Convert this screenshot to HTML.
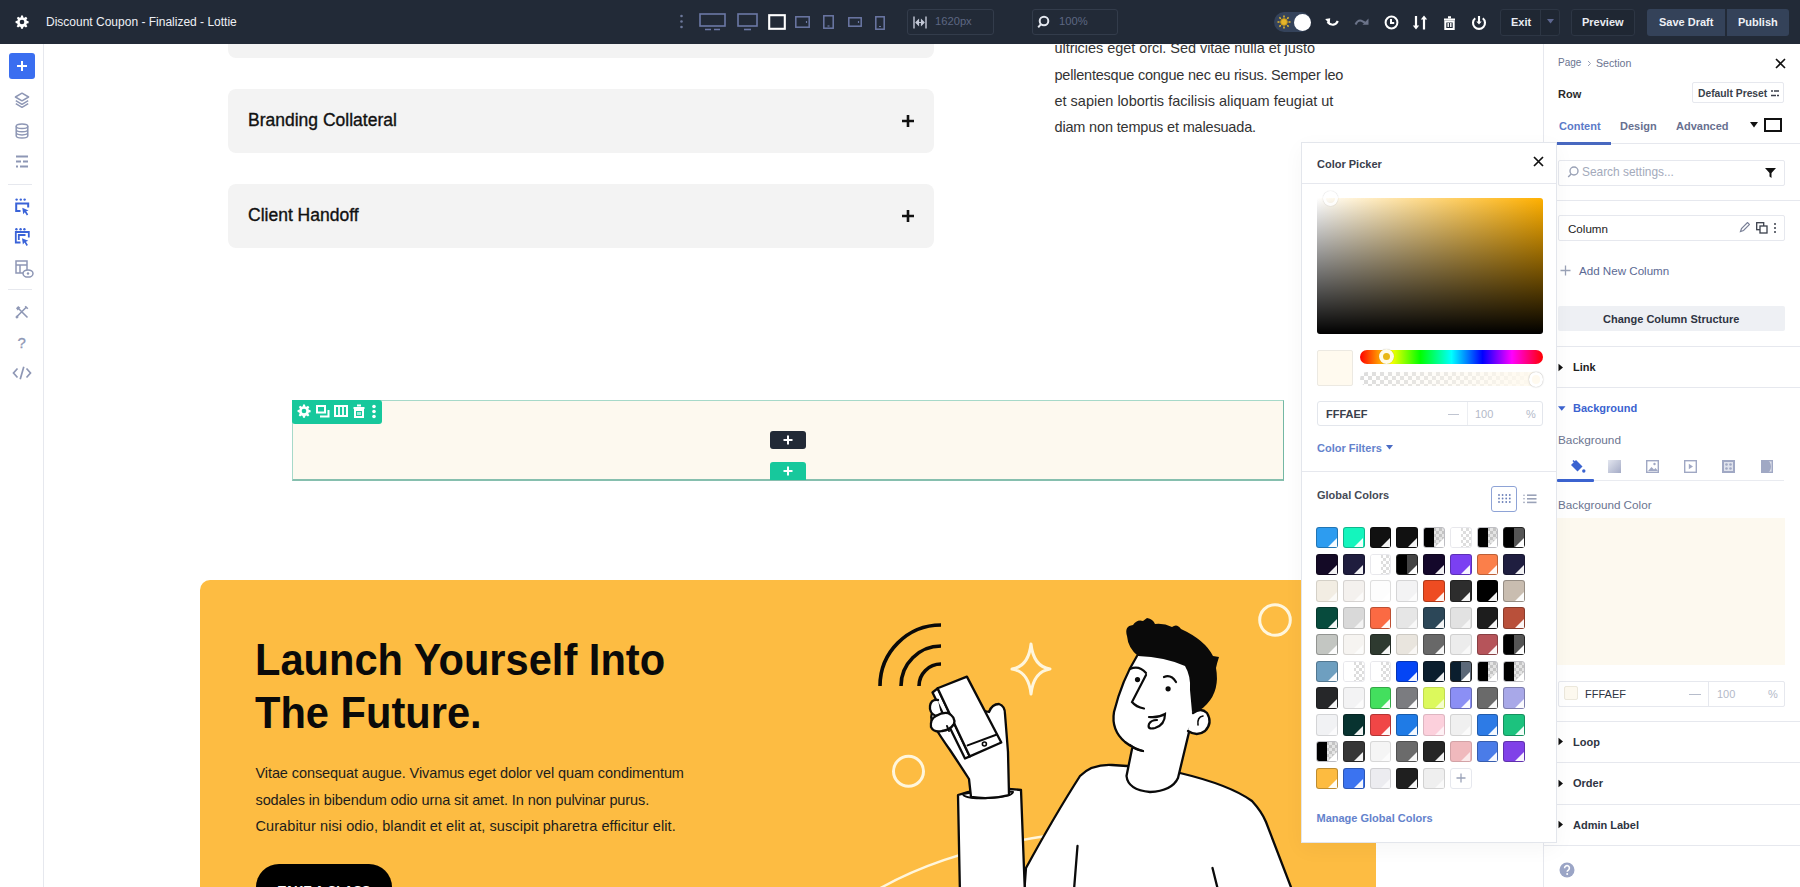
<!DOCTYPE html>
<html><head><meta charset="utf-8">
<style>
*{box-sizing:border-box;margin:0;padding:0}
html,body{width:1800px;height:887px;overflow:hidden;background:#fff;font-family:"Liberation Sans",sans-serif;position:relative}
.a{position:absolute}
.t{position:absolute;white-space:nowrap;line-height:1}
#top{left:0;top:0;width:1800px;height:44px;background:#222a37}
#side{left:0;top:44px;width:44px;height:843px;background:#fff;border-right:1px solid #e6e8ee}
</style></head><body>

<!-- ============ CANVAS ============ -->
<div id="canvas">
  <!-- accordions -->
  <div class="a" style="left:228px;top:-6px;width:706px;height:64px;background:#f3f3f3;border-radius:8px"></div>
  <div class="a" style="left:228px;top:89px;width:706px;height:64px;background:#f3f3f3;border-radius:8px"></div>
  <div class="a" style="left:228px;top:184px;width:706px;height:64px;background:#f3f3f3;border-radius:8px"></div>
  <div class="t" style="left:248px;top:111.5px;font-size:17.5px;color:#111;-webkit-text-stroke:0.35px #111">Branding Collateral</div>
  <div class="t" style="left:248px;top:206.5px;font-size:17.5px;color:#111;-webkit-text-stroke:0.35px #111">Client Handoff</div>
  <svg class="a" style="left:901px;top:114px" width="14" height="14"><path d="M7 1V13M1 7H13" stroke="#111" stroke-width="2.6"/></svg>
  <svg class="a" style="left:901px;top:209px" width="14" height="14"><path d="M7 1V13M1 7H13" stroke="#111" stroke-width="2.6"/></svg>

  <!-- right text -->
  <div class="t" style="left:1054.5px;top:41px;font-size:14.5px;color:#333;letter-spacing:-0.05px">ultricies eget orci. Sed vitae nulla et justo</div>
  <div class="t" style="left:1054.5px;top:68px;font-size:14.5px;color:#333;letter-spacing:-0.22px">pellentesque congue nec eu risus. Semper leo</div>
  <div class="t" style="left:1054.5px;top:94px;font-size:14.5px;color:#333">et sapien lobortis facilisis aliquam feugiat ut</div>
  <div class="t" style="left:1054.5px;top:120px;font-size:14.5px;color:#333;letter-spacing:-0.17px">diam non tempus et malesuada.</div>

  <!-- row -->
  <div class="a" style="left:292px;top:400px;width:992px;height:81px;background:#fdf9ef;border:1px solid #a6d9c9;border-bottom:2px solid #86bfae;border-right:1.5px solid #74b8a4"></div>
  <div class="a" style="left:292px;top:400px;width:90px;height:24px;background:#17c89c;border-radius:0 3px 3px 3px"></div>
  <svg class="a" style="left:297px;top:404px" width="14" height="14" viewBox="0 0 24 24"><path fill="#fff" d="M10.3 1h3.4l.6 3.1 1.9.8 2.6-1.8 2.4 2.4-1.8 2.6.8 1.9 3.1.6v3.4l-3.1.6-.8 1.9 1.8 2.6-2.4 2.4-2.6-1.8-1.9.8-.6 3.1h-3.4l-.6-3.1-1.9-.8-2.6 1.8-2.4-2.4 1.8-2.6-.8-1.9L1 13.7v-3.4l3.1-.6.8-1.9-1.8-2.6 2.4-2.4 2.6 1.8 1.9-.8zM12 8a4 4 0 100 8 4 4 0 000-8z"/></svg>
  <svg class="a" style="left:316px;top:405px" width="14" height="13"><path d="M1 1h8v6.5H1z" fill="none" stroke="#fff" stroke-width="2"/><path d="M4 11.5h8.5V5" fill="none" stroke="#fff" stroke-width="2"/></svg>
  <svg class="a" style="left:334px;top:405px" width="14" height="12"><rect x="1" y="1" width="12" height="10" fill="none" stroke="#fff" stroke-width="2"/><path d="M5 1v10M9 1v10" stroke="#fff" stroke-width="1.8"/></svg>
  <svg class="a" style="left:353px;top:404px" width="12" height="14"><path d="M0.5 4h11M4 1.5h4" stroke="#fff" stroke-width="2"/><rect x="2" y="6" width="8" height="7" fill="none" stroke="#fff" stroke-width="2"/><path d="M5 8v3M7 8v3" stroke="#fff" stroke-width="1.2"/></svg>
  <svg class="a" style="left:371px;top:404px" width="6" height="15"><circle cx="3" cy="2.5" r="1.8" fill="#fff"/><circle cx="3" cy="7.5" r="1.8" fill="#fff"/><circle cx="3" cy="12.5" r="1.8" fill="#fff"/></svg>
  <div class="a" style="left:770px;top:431px;width:36px;height:18px;background:#222a36;border-radius:3px"></div>
  <svg class="a" style="left:782px;top:434px" width="12" height="12"><path d="M6 1.5V10.5M1.5 6H10.5" stroke="#fff" stroke-width="2"/></svg>
  <div class="a" style="left:770px;top:462px;width:36px;height:18px;background:#17c89c;border-radius:3px 3px 0 0"></div>
  <svg class="a" style="left:782px;top:465px" width="12" height="12"><path d="M6 1.5V10.5M1.5 6H10.5" stroke="#fff" stroke-width="2"/></svg>

  <!-- CTA -->
  <div class="a" style="left:200px;top:580px;width:1176px;height:320px;background:#fdbc42;border-radius:10px 10px 0 0"></div>
  <div class="t" style="left:254.5px;top:633px;font-size:45px;font-weight:bold;color:#0a0a0a;line-height:53px;transform:scaleX(0.925);transform-origin:0 0">Launch Yourself Into<br>The Future.</div>
  <div class="t" style="left:255.5px;top:766px;font-size:14.5px;color:#1c1c1c;letter-spacing:-0.09px">Vitae consequat augue. Vivamus eget dolor vel quam condimentum</div>
  <div class="t" style="left:255.5px;top:792.5px;font-size:14.5px;color:#1c1c1c;letter-spacing:-0.1px">sodales in bibendum odio urna sit amet. In non pulvinar purus.</div>
  <div class="t" style="left:255.5px;top:819.3px;font-size:14.5px;color:#1c1c1c;letter-spacing:0.085px">Curabitur nisi odio, blandit et elit at, suscipit pharetra efficitur elit.</div>
  <svg class="a" style="left:840px;top:580px" width="460" height="307" viewBox="840 580 460 307">
  <g fill="none" stroke="#fff6dc" stroke-width="3">
    <circle cx="908.5" cy="771.3" r="15"/>
    <circle cx="1275" cy="620" r="15.3"/>
    <path d="M1031,644 Q1033.5,666.5 1050,669 Q1033.5,671.5 1031,694 Q1028.5,671.5 1012,669 Q1028.5,666.5 1031,644 Z" stroke-linejoin="round"/>
    <path d="M872,893 Q940,852 1046,836" stroke-width="2.5"/>
  </g>
  <g fill="none" stroke="#0a0a0a" stroke-width="3.6">
    <path d="M880,686 A61,61 0 0 1 941,625"/>
    <path d="M901,686 A40,40 0 0 1 941,646"/>
    <path d="M919,686 A22,22 0 0 1 941,664"/>
  </g>
  <g stroke="#0a0a0a" stroke-width="2.3" stroke-linejoin="round" stroke-linecap="round">
    <!-- torso -->
    <path fill="#fff" d="M1024,895 L1026,868 Q1055,815 1080,776 Q1092,764 1112,765 L1127,766 L1180,773 Q1230,785 1252,801 Q1262,812 1266,822 L1294,895 Z"/>
    <!-- neck+face fill -->
    <path fill="#fff" stroke="none" d="M1137,656 Q1122,680 1114,712 Q1111,730 1125,742 Q1134,748 1132,750 L1126.5,776 Q1128,790 1150,792 Q1172,791 1178,778 L1190,728 L1196,712 L1200,670 Q1170,650 1137,656 Z"/>
    <path fill="none" d="M1137,656 Q1122,680 1114,712 Q1111,730 1125,742 Q1134,749 1143,751"/>
    <path fill="none" d="M1132,749 L1126.5,776 Q1128,790 1150,792 Q1172,791 1178,778 L1190,728"/>
    <!-- ear -->
    <path fill="#fff" d="M1193,713 Q1201,707 1207,713 Q1213,723 1205,731 Q1197,737 1188,731"/>
    <path fill="none" stroke-width="1.6" d="M1203,716 Q1197,717 1198,725"/>
    <!-- sleeve -->
    <path fill="#fff" d="M958,795 Q985,786 1021,790 L1025,895 L960,895 Z"/>
    <path fill="#fff" stroke-width="2" d="M963,794 Q988,788 1013,792 Q1012,797 988,798 Q964,799 963,794 Z"/>
    <!-- hand -->
    <path fill="#fff" d="M971,797 L969,779 Q958,762 950,750 Q940,736 933,724 Q929,716 934,708 L945,702 L989,712 Q992,704 999,704 Q1005,706 1005,714 L1008,752 L1009,795 Q990,800 971,797 Z"/>
    <!-- phone side -->
    <path fill="#fff" d="M932.5,692.5 L937.6,688.3 L969.8,756.4 L965,758.5 Z"/>
    <!-- phone face -->
    <path fill="#fff" d="M937.6,688.3 L966.9,676.6 L1001.3,742.5 L969.8,756.4 Z"/>
    <path fill="none" stroke-width="2" d="M967.6,745.4 L996.9,734.5"/>
    <circle cx="984.4" cy="744" r="2" fill="none" stroke-width="1.6"/>
    <!-- fingers over phone side -->
    <path fill="#fff" d="M938,700 Q931,699 930,706 Q929,713 936,716 L941,715"/>
    <path fill="#fff" d="M936,716 Q930,719 931,727 Q934,733 942,731 Q950,730 954,724 Q956,717 948,713 Q942,712 936,716 Z"/>
    <path fill="none" stroke-width="2" d="M947,726 L949,731"/>
    <!-- arm inner lines -->
    <path fill="none" d="M1077.5,846 L1074,890"/>
    <path fill="none" d="M1212.5,868 L1218,890"/>
  </g>
  <!-- hair -->
  <path fill="#0a0a0a" d="M1127,636 Q1124,626 1133,625 Q1137,619 1143,621 L1147,618 Q1153,619 1155,624 Q1164,623 1172,627 Q1177,623 1181,629 Q1205,640 1213,656 L1219,657 Q1217,663 1216,668 Q1220,690 1207,704 Q1200,712 1192,712 L1190,690 Q1191,676 1185,666 Q1165,657 1138,656 Q1128,648 1127,636 Z"/>
  <g fill="none" stroke="#0a0a0a" stroke-width="2.2" stroke-linecap="round">
    <path d="M1130,669 Q1139,665 1146,673"/>
    <path d="M1164,677 Q1171,674 1176,682"/>
    <path d="M1146,675 L1132,702 Q1136,707 1144,708.5"/>
    <path d="M1149,717 Q1158,718 1165,714 Q1165,725 1155,728 Q1147,730 1149,724 Q1151,720 1157,720"/>
    <path d="M1130,745 Q1136,750 1143,751"/>
  </g>
  <circle cx="1137.5" cy="679.6" r="2.6" fill="#0a0a0a"/>
  <circle cx="1168.1" cy="688.8" r="2.6" fill="#0a0a0a"/>
</svg>
  <div class="a" style="left:256px;top:864px;width:136px;height:46px;background:#000;border-radius:23px"></div>
  <div class="t" style="left:278px;top:883.5px;font-size:13px;font-weight:bold;color:#fff;letter-spacing:-0.15px">TAKE A CLASS</div>
</div>

<!-- ============ TOP BAR ============ -->
<div id="top" class="a">
  <svg class="a" style="left:15px;top:15px" width="14" height="14" viewBox="0 0 24 24"><path fill="#fff" d="M10.3 1h3.4l.6 3.1 1.9.8 2.6-1.8 2.4 2.4-1.8 2.6.8 1.9 3.1.6v3.4l-3.1.6-.8 1.9 1.8 2.6-2.4 2.4-2.6-1.8-1.9.8-.6 3.1h-3.4l-.6-3.1-1.9-.8-2.6 1.8-2.4-2.4 1.8-2.6-.8-1.9L1 13.7v-3.4l3.1-.6.8-1.9-1.8-2.6 2.4-2.4 2.6 1.8 1.9-.8zM12 8a4 4 0 100 8 4 4 0 000-8z"/></svg>
  <div class="t" style="left:46px;top:16px;font-size:12px;color:#eef0f5">Discount Coupon - Finalized - Lottie</div>
  <!-- dots -->
  <svg class="a" style="left:679px;top:14px" width="5" height="15"><circle cx="2.5" cy="2" r="1.3" fill="#6c7799"/><circle cx="2.5" cy="7.5" r="1.3" fill="#6c7799"/><circle cx="2.5" cy="13" r="1.3" fill="#6c7799"/></svg>
  <!-- desktop large -->
  <svg class="a" style="left:699px;top:13px" width="27" height="18"><rect x="1" y="1" width="25" height="12" fill="none" stroke="#6c78a6" stroke-width="1.6"/><path d="M6 16.5h6M15 16.5h6" stroke="#6c78a6" stroke-width="1.6"/></svg>
  <!-- desktop -->
  <svg class="a" style="left:737px;top:13px" width="21" height="18"><rect x="1" y="1" width="19" height="12" fill="none" stroke="#6c78a6" stroke-width="1.6"/><path d="M7 16.5h7" stroke="#6c78a6" stroke-width="1.6"/></svg>
  <!-- selected -->
  <svg class="a" style="left:768px;top:14px" width="18" height="16"><rect x="1.2" y="1.2" width="15.6" height="13.6" fill="none" stroke="#fff" stroke-width="2.1"/></svg>
  <!-- tablet landscape -->
  <svg class="a" style="left:795px;top:16px" width="15" height="12"><rect x="0.8" y="0.8" width="13.4" height="10.4" fill="none" stroke="#6c78a6" stroke-width="1.5"/><path d="M11.5 5v2" stroke="#6c78a6" stroke-width="1.2"/></svg>
  <!-- tablet portrait -->
  <svg class="a" style="left:823px;top:15px" width="11" height="14"><rect x="0.8" y="0.8" width="9.4" height="12.4" fill="none" stroke="#6c78a6" stroke-width="1.5"/><path d="M4.5 11h2" stroke="#6c78a6" stroke-width="1.2"/></svg>
  <!-- phone landscape -->
  <svg class="a" style="left:848px;top:17px" width="14" height="10"><rect x="0.8" y="0.8" width="12.4" height="8.4" fill="none" stroke="#6c78a6" stroke-width="1.5"/><path d="M10.5 4v2" stroke="#6c78a6" stroke-width="1.2"/></svg>
  <!-- phone portrait -->
  <svg class="a" style="left:875px;top:16px" width="10" height="14"><rect x="0.8" y="0.8" width="8.4" height="12.4" fill="none" stroke="#6c78a6" stroke-width="1.5"/><path d="M4 10.5h2" stroke="#6c78a6" stroke-width="1.2"/></svg>
  <!-- width box -->
  <div class="a" style="left:907px;top:9px;width:87px;height:26px;border:1px solid #333c4b;border-radius:3px"></div>
  <svg class="a" style="left:913px;top:16px" width="14" height="13"><path d="M1 0.5v12M13 0.5v12" stroke="#c3c8d6" stroke-width="1.4"/><path d="M3 6.5h8M3 6.5l2.5-2.5v5zM11 6.5l-2.5-2.5v5z" stroke="#c3c8d6" stroke-width="1.2" fill="#c3c8d6"/></svg>
  <div class="t" style="left:935px;top:16px;font-size:11.2px;color:#5d6782">1620px</div>
  <!-- zoom box -->
  <div class="a" style="left:1032px;top:9px;width:86px;height:26px;border:1px solid #333c4b;border-radius:3px"></div>
  <svg class="a" style="left:1037px;top:15px" width="13" height="14"><circle cx="7" cy="6" r="4.3" fill="none" stroke="#e4e7ef" stroke-width="2"/><path d="M4 9.2L1.2 12.4" stroke="#e4e7ef" stroke-width="2"/></svg>
  <div class="t" style="left:1059px;top:16px;font-size:11.2px;color:#5d6782">100%</div>
  <!-- toggle -->
  <div class="a" style="left:1274px;top:12px;width:37px;height:20px;background:#35435b;border-radius:10px"></div>
  <svg class="a" style="left:1277px;top:15px" width="14" height="14" viewBox="0 0 14 14"><circle cx="7" cy="7" r="3.3" fill="#e5b52c" stroke="#c99a14" stroke-width="1"/><g stroke="#e8bb2e" stroke-width="1.5"><path d="M7 0.5v2M7 11.5v2M0.5 7h2M11.5 7h2M2.4 2.4l1.4 1.4M10.2 10.2l1.4 1.4M2.4 11.6l1.4-1.4M10.2 3.8l1.4-1.4"/></g></svg>
  <div class="a" style="left:1294px;top:14px;width:17px;height:17px;background:#fff;border-radius:50%"></div>
  <!-- undo -->
  <svg class="a" style="left:1324px;top:16px" width="16" height="11"><path d="M3.5 6c2 2.3 4 3 6 2.7 2-.3 3.3-1.6 4.3-3.7" fill="none" stroke="#fff" stroke-width="2.2"/><path d="M1.2 3l5 -0.8-0.6 6z" fill="#fff"/></svg>
  <!-- redo -->
  <svg class="a" style="left:1354px;top:16px" width="16" height="11"><path d="M1.5 8.5c1.2-2.5 2.5-4 4.5-4 2 0 3 1.3 5 2" fill="none" stroke="#6b7389" stroke-width="2"/><path d="M14.5 2.5v6.2h-6z" fill="#6b7389"/></svg>
  <!-- clock -->
  <svg class="a" style="left:1384px;top:15px" width="15" height="15"><circle cx="7.5" cy="7.5" r="5.9" fill="none" stroke="#fff" stroke-width="2"/><path d="M7 4v4h3.2" fill="none" stroke="#fff" stroke-width="2"/></svg>
  <!-- sort -->
  <svg class="a" style="left:1412px;top:15px" width="16" height="15"><path d="M4 1v10.5M12 4v10.5" stroke="#fff" stroke-width="2.2"/><path d="M0.8 10.5L4 14.5l3.2-4zM8.8 4.5L12 0.5l3.2 4z" fill="#fff"/></svg>
  <!-- trash -->
  <svg class="a" style="left:1443px;top:16px" width="13" height="14"><path d="M1 3.5h11M5 1.2h3" stroke="#fff" stroke-width="2"/><rect x="2.3" y="5.5" width="8.4" height="7.5" fill="none" stroke="#fff" stroke-width="2"/><path d="M5.2 7v4M7.8 7v4" stroke="#fff" stroke-width="1.4"/></svg>
  <!-- power -->
  <svg class="a" style="left:1471px;top:15px" width="16" height="15"><path d="M4.2 3.2A6 6 0 1011.8 3.2" fill="none" stroke="#fff" stroke-width="2.1"/><path d="M8 1v7" stroke="#fff" stroke-width="2.1"/><path d="M5.3 6.5L8 9.5l2.7-3z" fill="#fff"/></svg>
  <!-- exit -->
  <div class="a" style="left:1500px;top:9px;width:60px;height:27px;border:1px solid #2d3644;border-radius:3px;background:#1f2733"></div>
  <div class="a" style="left:1540px;top:10px;width:1px;height:25px;background:#2d3644"></div>
  <div class="t" style="left:1511px;top:17px;font-size:11px;font-weight:bold;color:#e9ecf2">Exit</div>
  <svg class="a" style="left:1547px;top:19px" width="7" height="5"><path d="M0 0h7L3.5 4.5z" fill="#5d6790"/></svg>
  <!-- preview -->
  <div class="a" style="left:1571px;top:9px;width:64px;height:27px;border:1px solid #2d3644;border-radius:3px;background:#1f2733"></div>
  <div class="t" style="left:1582px;top:17px;font-size:11px;font-weight:bold;color:#e9ecf2">Preview</div>
  <!-- save/publish -->
  <div class="a" style="left:1647px;top:9px;width:78px;height:27px;background:#344259;border-radius:3px 0 0 3px"></div>
  <div class="a" style="left:1727px;top:9px;width:62px;height:27px;background:#344259;border-radius:0 3px 3px 0"></div>
  <div class="t" style="left:1659px;top:17px;font-size:11px;font-weight:bold;color:#eef0f5">Save Draft</div>
  <div class="t" style="left:1738px;top:17px;font-size:11px;font-weight:bold;color:#eef0f5">Publish</div>
</div>
<!-- ============ LEFT SIDEBAR ============ -->
<div id="side" class="a">
  <div class="a" style="left:9px;top:9px;width:26px;height:26px;background:#3a6ef0;border-radius:3px"></div>
  <svg class="a" style="left:16px;top:16px" width="12" height="12"><path d="M6 1v10M1 6h10" stroke="#fff" stroke-width="2"/></svg>
  <!-- layers -->
  <svg class="a" style="left:14px;top:48px" width="16" height="17" viewBox="0 0 16 17"><path d="M8 1.2L14.6 5 8 8.8 1.4 5z" fill="none" stroke="#8e97b5" stroke-width="1.5" stroke-linejoin="round"/><path d="M1.8 8.6L8 12.3l6.2-3.7M1.8 11.6L8 15.3l6.2-3.7" fill="none" stroke="#8e97b5" stroke-width="1.5" stroke-linejoin="round"/></svg>
  <!-- database -->
  <svg class="a" style="left:15px;top:79px" width="14" height="16" viewBox="0 0 14 16"><ellipse cx="7" cy="3.2" rx="5.8" ry="2.3" fill="none" stroke="#8e97b5" stroke-width="1.5"/><path d="M1.2 3.2v9.6c0 1.3 2.6 2.3 5.8 2.3s5.8-1 5.8-2.3V3.2M1.2 6.4c0 1.3 2.6 2.3 5.8 2.3s5.8-1 5.8-2.3M1.2 9.6c0 1.3 2.6 2.3 5.8 2.3s5.8-1 5.8-2.3" fill="none" stroke="#8e97b5" stroke-width="1.5"/></svg>
  <!-- list filter -->
  <svg class="a" style="left:15px;top:111px" width="14" height="13" viewBox="0 0 14 13"><path d="M1 1.5h12M1 6.5h5M8 6.5h5M1 11.5h2M5 11.5h8" stroke="#8e97b5" stroke-width="2"/></svg>
  <div class="a" style="left:8px;top:140px;width:24px;height:1px;background:#e6e8ee"></div>
  <!-- select -->
  <svg class="a" style="left:14px;top:153px" width="16" height="20" viewBox="0 0 16 20"><g fill="#3a63d8"><circle cx="2.6" cy="2.6" r="1.2"/><circle cx="6.8" cy="2.6" r="1.2"/><circle cx="10.6" cy="2.6" r="1.2"/></g><path d="M6.5 13.9H2.2V6.4H14.2V10.5" fill="none" stroke="#3a63d8" stroke-width="2"/><path d="M8.3 10.8L14.6 13.4 12.2 14.3 14.2 17.6 12.8 18.5 10.8 15.2 9.2 17.2Z" fill="#3a63d8"/></svg>
  <!-- multi select -->
  <svg class="a" style="left:14px;top:183px" width="17" height="21" viewBox="0 0 17 21"><g fill="#3a63d8"><circle cx="2.4" cy="2.2" r="1.2"/><circle cx="6.6" cy="2.2" r="1.2"/><circle cx="10.4" cy="2.2" r="1.2"/></g><path d="M6.5 15.5H1.8V5H14.8V10.5M4.8 13V8H11.5" fill="none" stroke="#3a63d8" stroke-width="1.8"/><path d="M8 11.2L14.3 13.8 11.9 14.7 13.9 18 12.5 18.9 10.5 15.6 8.9 17.6Z" fill="#3a63d8"/></svg>
  <!-- template eye -->
  <svg class="a" style="left:15px;top:216px" width="19" height="19" viewBox="0 0 19 19"><rect x="1" y="1" width="11" height="12" fill="none" stroke="#8e97b5" stroke-width="1.5"/><path d="M1 5h11M5 5v8" stroke="#8e97b5" stroke-width="1.5"/><ellipse cx="13" cy="13.5" rx="5" ry="3.6" fill="#fff" stroke="#8e97b5" stroke-width="1.5"/><circle cx="13" cy="13.5" r="1.2" fill="#8e97b5"/></svg>
  <div class="a" style="left:8px;top:245px;width:24px;height:1px;background:#e6e8ee"></div>
  <!-- tools -->
  <svg class="a" style="left:15px;top:261px" width="14" height="14" viewBox="0 0 14 14"><path d="M4 4l8.5 8.5M11.5 2L2 11.5" stroke="#8e97b5" stroke-width="1.6"/><path d="M1 3.2L3.2 1l2.2 1.8-2.6 2.6z" fill="#8e97b5"/><path d="M1.2 11.2l1.6 1.6" stroke="#8e97b5" stroke-width="2.6"/><path d="M10.2 1.2l2.6 2.6" stroke="#8e97b5" stroke-width="1.6"/></svg>
  <div class="t" style="left:17.5px;top:291px;font-size:15px;color:#8e97b5;-webkit-text-stroke:0.3px #8e97b5">?</div>
  <svg class="a" style="left:12px;top:322px" width="20" height="14" viewBox="0 0 20 14"><path d="M5.5 2.5L1.5 7l4 4.5M14.5 2.5l4 4.5-4 4.5M11.8 0.8L8.2 13.2" fill="none" stroke="#8e97b5" stroke-width="1.7"/></svg>
</div>

<!-- ============ RIGHT PANEL ============ -->
<div id="rp" class="a" style="left:1543px;top:44px;width:257px;height:843px;background:#fff;border-left:1px solid #e6e8ee">
</div>
<div id="rpc" class="a" style="left:0;top:0;width:0;height:0">
  <div class="t" style="left:1558px;top:58px;font-size:10px;color:#6b7490">Page</div>
  <svg class="a" style="left:1587px;top:60px" width="5" height="7"><path d="M1 1l2.5 2.5L1 6" fill="none" stroke="#9aa2b8" stroke-width="1"/></svg>
  <div class="t" style="left:1596px;top:58px;font-size:10.6px;color:#6b7490">Section</div>
  <svg class="a" style="left:1775px;top:58px" width="11" height="11"><path d="M1 1l9 9M10 1L1 10" stroke="#111" stroke-width="1.6"/></svg>
  <div class="t" style="left:1558px;top:89px;font-size:11px;font-weight:bold;color:#2a2a2a">Row</div>
  <div class="a" style="left:1692px;top:82px;width:92px;height:21px;border:1px solid #e6e8ee;border-radius:2px"></div>
  <div class="t" style="left:1698px;top:89px;font-size:10.3px;font-weight:bold;color:#3a3f4b">Default Preset</div>
  <svg class="a" style="left:1771px;top:90px" width="8" height="7"><path d="M0 1h2M3 1h5M0 5.5h5M6 5.5h2" stroke="#3a3f4b" stroke-width="1.6"/></svg>
  <div class="t" style="left:1559px;top:121px;font-size:11px;font-weight:bold;color:#5b7ac8">Content</div>
  <div class="t" style="left:1620px;top:121px;font-size:11px;font-weight:bold;color:#687090">Design</div>
  <div class="t" style="left:1676px;top:121px;font-size:11px;font-weight:bold;color:#687090">Advanced</div>
  <svg class="a" style="left:1750px;top:122px" width="8" height="6"><path d="M0 0h8L4 5.5z" fill="#111"/></svg>
  <div class="a" style="left:1764px;top:118px;width:18px;height:14px;border:2px solid #111"></div>
  <div class="a" style="left:1557px;top:143px;width:243px;height:1px;background:#e6e8ee"></div>
  <div class="a" style="left:1557px;top:142px;width:54px;height:3px;background:#4868c0"></div>
  <!-- search -->
  <div class="a" style="left:1558px;top:160px;width:227px;height:26px;border:1px solid #e6e8ee;border-radius:2px"></div>
  <svg class="a" style="left:1567px;top:166px" width="12" height="12"><circle cx="7" cy="5" r="4" fill="none" stroke="#9aa2b6" stroke-width="1.4"/><path d="M4.2 8L1.2 11" stroke="#9aa2b6" stroke-width="1.4"/></svg>
  <div class="t" style="left:1582px;top:167px;font-size:11.9px;color:#a3aabb">Search settings...</div>
  <svg class="a" style="left:1765px;top:168px" width="11" height="10"><path d="M0 0h11L6.5 5v5L4.5 8.5V5z" fill="#111"/></svg>
  <div class="a" style="left:1557px;top:200px;width:243px;height:1px;background:#e6e8ee"></div>
  <!-- column -->
  <div class="a" style="left:1558px;top:215px;width:227px;height:26px;border:1px solid #e6e8ee;border-radius:2px"></div>
  <div class="t" style="left:1568px;top:223px;font-size:11.6px;color:#222">Column</div>
  <svg class="a" style="left:1739px;top:222px" width="11" height="11"><path d="M1.5 9.5l1-3 6-6 2 2-6 6z" fill="none" stroke="#7a8198" stroke-width="1.2"/></svg>
  <svg class="a" style="left:1756px;top:222px" width="12" height="12"><rect x="0.7" y="0.7" width="7" height="7" fill="none" stroke="#3a3f4b" stroke-width="1.3"/><rect x="4" y="4" width="7" height="7" fill="#fff" stroke="#3a3f4b" stroke-width="1.3"/></svg>
  <svg class="a" style="left:1773px;top:222px" width="4" height="12"><circle cx="2" cy="2" r="1" fill="#3a3f4b"/><circle cx="2" cy="6" r="1" fill="#3a3f4b"/><circle cx="2" cy="10" r="1" fill="#3a3f4b"/></svg>
  <svg class="a" style="left:1560px;top:265px" width="11" height="11"><path d="M5.5 0.5v10M0.5 5.5h10" stroke="#9aa2b6" stroke-width="1.3"/></svg>
  <div class="t" style="left:1579px;top:265px;font-size:11.6px;color:#5b6a94">Add New Column</div>
  <div class="a" style="left:1558px;top:306px;width:227px;height:25px;background:#eef0f4;border-radius:2px"></div>
  <div class="t" style="left:1603px;top:314px;font-size:11px;font-weight:bold;color:#2e3442">Change Column Structure</div>
  <div class="a" style="left:1557px;top:346px;width:243px;height:1px;background:#e6e8ee"></div>
  <svg class="a" style="left:1558px;top:363px" width="6" height="9"><path d="M0.5 0.8l4.5 3.7-4.5 3.7z" fill="#111"/></svg>
  <div class="t" style="left:1573px;top:362px;font-size:11px;font-weight:bold;color:#222">Link</div>
  <div class="a" style="left:1557px;top:387px;width:243px;height:1px;background:#e6e8ee"></div>
  <svg class="a" style="left:1558px;top:405.5px" width="8" height="6"><path d="M0 0.3h7.5L3.75 4.8z" fill="#3b63d0"/></svg>
  <div class="t" style="left:1573px;top:403px;font-size:11px;font-weight:bold;color:#3b63d0">Background</div>
  <div class="t" style="left:1558px;top:435px;font-size:11.8px;color:#6b7490">Background</div>
  <!-- bg tabs -->
  <svg class="a" style="left:1569px;top:459px" width="17" height="15" viewBox="0 0 17 15"><path d="M7 1l6.5 6.5-5 5L2 6z" fill="#3b63d0"/><path d="M4 1.5l3 3" stroke="#3b63d0" stroke-width="1.6"/><circle cx="14.8" cy="12" r="1.7" fill="#3b63d0"/></svg>
  <svg class="a" style="left:1608px;top:460px" width="13" height="13"><defs><linearGradient id="gg" x1="0" y1="0" x2="1" y2="1"><stop offset="0" stop-color="#e3e6ef"/><stop offset="1" stop-color="#a4abc6"/></linearGradient></defs><rect x="0" y="0" width="13" height="13" fill="url(#gg)"/></svg>
  <svg class="a" style="left:1646px;top:460px" width="13" height="13"><rect x="0.7" y="0.7" width="11.6" height="11.6" fill="none" stroke="#a0a8c4" stroke-width="1.4"/><path d="M2 11l3.5-4 2.5 2.5 1.5-1.5 2.5 3z" fill="#a0a8c4"/><circle cx="8.5" cy="4" r="1.2" fill="#a0a8c4"/></svg>
  <svg class="a" style="left:1684px;top:460px" width="13" height="13"><rect x="0.7" y="0.7" width="11.6" height="11.6" fill="none" stroke="#a0a8c4" stroke-width="1.4"/><path d="M4.8 3.8v5.4l4.2-2.7z" fill="#a0a8c4"/></svg>
  <svg class="a" style="left:1722px;top:460px" width="13" height="13"><rect x="0" y="0" width="13" height="13" fill="#a0a8c4"/><rect x="2" y="2" width="9" height="9" fill="#dfe2ec"/><circle cx="4.5" cy="4.5" r="1.3" fill="#a0a8c4"/><circle cx="8.5" cy="4.5" r="1.3" fill="#a0a8c4"/><circle cx="4.5" cy="8.5" r="1.3" fill="#a0a8c4"/><circle cx="8.5" cy="8.5" r="1.3" fill="#a0a8c4"/></svg>
  <svg class="a" style="left:1761px;top:460px" width="12" height="13"><rect x="0.7" y="0.7" width="10.6" height="11.6" fill="#dfe2ec" stroke="#a0a8c4" stroke-width="1.4"/><path d="M0 0h5.5a4.5 6.5 0 010 13H0z" fill="#a0a8c4"/></svg>
  <div class="a" style="left:1557px;top:480px;width:227px;height:1px;background:#e9ebf0"></div>
  <div class="a" style="left:1557px;top:479px;width:37px;height:3px;background:#3b63d0;border-radius:1px"></div>
  <div class="t" style="left:1558px;top:499px;font-size:11.7px;color:#6b7490">Background Color</div>
  <div class="a" style="left:1557px;top:518px;width:228px;height:147px;background:#fdf9ef"></div>
  <!-- input -->
  <div class="a" style="left:1558px;top:681px;width:227px;height:26px;border:1px solid #e6e8ee;border-radius:2px"></div>
  <div class="a" style="left:1708px;top:682px;width:1px;height:24px;background:#e6e8ee"></div>
  <div class="a" style="left:1564px;top:686px;width:14px;height:14px;background:#fdf9ef;border:1px solid #ece8dc;border-radius:2px"></div>
  <div class="t" style="left:1585px;top:689px;font-size:11px;color:#2e3442">FFFAEF</div>
  <div class="a" style="left:1689px;top:694px;width:12px;height:1px;background:#b6bccb"></div>
  <div class="t" style="left:1717px;top:689px;font-size:11px;color:#b3b9c8">100</div>
  <div class="t" style="left:1768px;top:689px;font-size:11px;color:#b3b9c8">%</div>
  <div class="a" style="left:1557px;top:721px;width:243px;height:1px;background:#e6e8ee"></div>
  <svg class="a" style="left:1558px;top:737px" width="6" height="9"><path d="M0.5 0.8l4.5 3.7-4.5 3.7z" fill="#111"/></svg>
  <div class="t" style="left:1573px;top:737px;font-size:11px;font-weight:bold;color:#2e3442">Loop</div>
  <div class="a" style="left:1557px;top:762px;width:243px;height:1px;background:#e6e8ee"></div>
  <svg class="a" style="left:1558px;top:779px" width="6" height="9"><path d="M0.5 0.8l4.5 3.7-4.5 3.7z" fill="#111"/></svg>
  <div class="t" style="left:1573px;top:778px;font-size:11px;font-weight:bold;color:#2e3442">Order</div>
  <div class="a" style="left:1557px;top:804px;width:243px;height:1px;background:#e6e8ee"></div>
  <svg class="a" style="left:1558px;top:820px" width="6" height="9"><path d="M0.5 0.8l4.5 3.7-4.5 3.7z" fill="#111"/></svg>
  <div class="t" style="left:1573px;top:820px;font-size:11px;font-weight:bold;color:#2e3442">Admin Label</div>
  <div class="a" style="left:1543px;top:845px;width:257px;height:1px;background:#e6e8ee"></div>
  <div class="a" style="left:1557px;top:44px;width:1px;height:0px;background:#e6e8ee"></div>
  <svg class="a" style="left:1559px;top:862px" width="16" height="16"><circle cx="8" cy="8" r="7.5" fill="#9ba5c6"/><path d="M5.6 6.2a2.4 2.4 0 114 1.6c-.9.6-1.4 1-1.4 2" fill="none" stroke="#fff" stroke-width="1.6"/><circle cx="8.2" cy="12" r="1" fill="#fff"/></svg>
</div>

<!-- ============ COLOR PICKER ============ -->
<div id="cp" class="a" style="left:1301px;top:142px;width:256px;height:701px;background:#fff;border:1px solid #e3e6ec;box-shadow:0 6px 20px rgba(0,0,0,0.04)"></div>
<div id="cpc" class="a" style="left:0;top:0;width:0;height:0">
  <div class="t" style="left:1317px;top:159px;font-size:11px;font-weight:bold;color:#3a404c">Color Picker</div>
  <svg class="a" style="left:1533px;top:156px" width="11" height="11"><path d="M1 1l9 9M10 1L1 10" stroke="#111" stroke-width="1.7"/></svg>
  <div class="a" style="left:1302px;top:183px;width:254px;height:1px;background:#e6e8ee"></div>
  <div class="a" style="left:1316.5px;top:198px;width:226px;height:136px;border-radius:3px;background:linear-gradient(to top,#000,rgba(0,0,0,0)),linear-gradient(to right,#fff,#ffb000)"></div>
  <div class="a" style="left:1322.5px;top:191px;width:15px;height:15px;border-radius:50%;border:3px solid rgba(255,255,255,0.85);box-shadow:0 0 1px rgba(0,0,0,0.3)"></div>
  <div class="a" style="left:1316.5px;top:350px;width:36px;height:36px;background:#fffaef;border:1px solid #ece9e2;border-radius:2px"></div>
  <div class="a" style="left:1360px;top:349.5px;width:182.5px;height:14.5px;border-radius:7px;background:linear-gradient(to right,#f00 0%,#ff0 17%,#0f0 33%,#0ff 50%,#00f 67%,#f0f 83%,#f00 100%)"></div>
  <div class="a" style="left:1379px;top:349px;width:15px;height:15px;border-radius:50%;background:#e9b715;border:4px solid #fffbe8;box-shadow:0 0 1px rgba(0,0,0,0.3)"></div>
  <div class="a" style="left:1360px;top:372px;width:182.5px;height:14px;border-radius:7px;background-color:#fff;background-image:linear-gradient(45deg,#ddd 25%,transparent 25%,transparent 75%,#ddd 75%),linear-gradient(45deg,#ddd 25%,transparent 25%,transparent 75%,#ddd 75%);background-size:6px 6px;background-position:0 0,3px 3px;background-size:8px 8px;background-position:0 0,4px 4px;overflow:hidden"><div class="a" style="left:0;top:0;width:100%;height:100%;background:linear-gradient(to right,rgba(255,250,239,0),#fffaef)"></div></div>
  <div class="a" style="left:1528.5px;top:372px;width:14.5px;height:14.5px;border-radius:50%;background:#fffaef;border:3px solid #fff;box-shadow:0 0 1.5px rgba(0,0,0,0.35)"></div>
  <div class="a" style="left:1316.5px;top:401px;width:226px;height:25px;border:1px solid #e3e6ec;border-radius:3px"></div>
  <div class="a" style="left:1466.5px;top:402px;width:1px;height:23px;background:#eceef2"></div>
  <div class="t" style="left:1326px;top:409px;font-size:11px;font-weight:bold;color:#3a404c">FFFAEF</div>
  <div class="a" style="left:1448px;top:414px;width:11px;height:1px;background:#c0c5d1"></div>
  <div class="t" style="left:1475px;top:409px;font-size:11px;color:#b3b9c8">100</div>
  <div class="t" style="left:1526px;top:409px;font-size:11px;color:#b3b9c8">%</div>
  <div class="t" style="left:1317px;top:443px;font-size:11px;font-weight:bold;color:#6482cc">Color Filters</div>
  <svg class="a" style="left:1386px;top:445px" width="7" height="5"><path d="M0 0h7L3.5 4.5z" fill="#4a6bc4"/></svg>
  <div class="a" style="left:1302px;top:471px;width:254px;height:1px;background:#e6e8ee"></div>
  <div class="t" style="left:1317px;top:490px;font-size:11px;font-weight:bold;color:#454a56">Global Colors</div>
  <div class="a" style="left:1491px;top:486px;width:26px;height:26px;border:1px solid #8ea3d6;border-radius:3px"></div>
  <svg class="a" style="left:1498px;top:494px" width="13" height="9"><g fill="#6a7fb8"><circle cx="1" cy="1" r="0.9"/><circle cx="4.6" cy="1" r="0.9"/><circle cx="8.2" cy="1" r="0.9"/><circle cx="11.8" cy="1" r="0.9"/><circle cx="1" cy="4.5" r="0.9"/><circle cx="4.6" cy="4.5" r="0.9"/><circle cx="8.2" cy="4.5" r="0.9"/><circle cx="11.8" cy="4.5" r="0.9"/><circle cx="1" cy="8" r="0.9"/><circle cx="4.6" cy="8" r="0.9"/><circle cx="8.2" cy="8" r="0.9"/><circle cx="11.8" cy="8" r="0.9"/></g></svg>
  <svg class="a" style="left:1523px;top:494px" width="14" height="10"><g fill="#9aa2b8"><circle cx="1" cy="1.2" r="0.8"/><circle cx="1" cy="4.8" r="0.8"/><circle cx="1" cy="8.4" r="0.8"/><rect x="4" y="0.4" width="9.5" height="1.6"/><rect x="4" y="4" width="9.5" height="1.6"/><rect x="4" y="7.6" width="9.5" height="1.6"/></g></svg>
  <div class="a" style="left:1316.20px;top:526.80px;width:21.7px;height:21.7px;border-radius:3px;background:#2d9cf0;border:1px solid rgba(0,0,0,0.25)"></div>
  <svg class="a" style="left:1327.70px;top:538.30px" width="9" height="9"><path d="M9 0V9H0z" fill="#fff" fill-opacity="0.95"/></svg>
  <div class="a" style="left:1342.95px;top:526.80px;width:21.7px;height:21.7px;border-radius:3px;background:#14f5bd;border:1px solid rgba(0,0,0,0.25)"></div>
  <svg class="a" style="left:1354.45px;top:538.30px" width="9" height="9"><path d="M9 0V9H0z" fill="#fff" fill-opacity="0.95"/></svg>
  <div class="a" style="left:1369.70px;top:526.80px;width:21.7px;height:21.7px;border-radius:3px;background:#111111;border:1px solid rgba(0,0,0,0.25)"></div>
  <svg class="a" style="left:1381.20px;top:538.30px" width="9" height="9"><path d="M9 0V9H0z" fill="#fff" fill-opacity="0.95"/></svg>
  <div class="a" style="left:1396.45px;top:526.80px;width:21.7px;height:21.7px;border-radius:3px;background:#111111;border:1px solid rgba(0,0,0,0.25)"></div>
  <svg class="a" style="left:1407.95px;top:538.30px" width="9" height="9"><path d="M9 0V9H0z" fill="#fff" fill-opacity="0.95"/></svg>
  <div class="a" style="left:1423.20px;top:526.80px;width:21.7px;height:21.7px;border-radius:3px;border:1px solid #bdbdc2;background-color:#e4e4e4;background-image:linear-gradient(45deg,#c4c4c4 25%,transparent 25%,transparent 75%,#c4c4c4 75%),linear-gradient(45deg,#c4c4c4 25%,transparent 25%,transparent 75%,#c4c4c4 75%);background-size:6px 6px;background-position:0 0,3px 3px;overflow:hidden"><div class="a" style="left:0;top:0;width:50%;height:100%;background:#000"></div></div>
  <svg class="a" style="left:1434.70px;top:538.30px" width="9" height="9"><path d="M9 0V9H0z" fill="#fff"/></svg>
  <div class="a" style="left:1449.95px;top:526.80px;width:21.7px;height:21.7px;border-radius:3px;border:1px solid #e8e8ec;overflow:hidden;background-color:#fff;background-image:linear-gradient(45deg,#ddd 25%,transparent 25%,transparent 75%,#ddd 75%),linear-gradient(45deg,#ddd 25%,transparent 25%,transparent 75%,#ddd 75%);background-size:6px 6px;background-position:0 0,3px 3px;"><div class="a" style="left:0;top:0;width:50%;height:100%;background:#fff"></div></div>
  <div class="a" style="left:1476.70px;top:526.80px;width:21.7px;height:21.7px;border-radius:3px;border:1px solid #bdbdc2;background-color:#e4e4e4;background-image:linear-gradient(45deg,#c4c4c4 25%,transparent 25%,transparent 75%,#c4c4c4 75%),linear-gradient(45deg,#c4c4c4 25%,transparent 25%,transparent 75%,#c4c4c4 75%);background-size:6px 6px;background-position:0 0,3px 3px;overflow:hidden"><div class="a" style="left:0;top:0;width:50%;height:100%;background:#000"></div></div>
  <svg class="a" style="left:1488.20px;top:538.30px" width="9" height="9"><path d="M9 0V9H0z" fill="#fff"/></svg>
  <div class="a" style="left:1503.45px;top:526.80px;width:21.7px;height:21.7px;border-radius:3px;border:1px solid #222;background:linear-gradient(90deg,#000 50%,#555 50%)"></div>
  <svg class="a" style="left:1514.95px;top:538.30px" width="9" height="9"><path d="M9 0V9H0z" fill="#fff"/></svg>
  <div class="a" style="left:1316.20px;top:553.55px;width:21.7px;height:21.7px;border-radius:3px;background:#140a26;border:1px solid rgba(0,0,0,0.25)"></div>
  <svg class="a" style="left:1327.70px;top:565.05px" width="9" height="9"><path d="M9 0V9H0z" fill="#fff" fill-opacity="0.95"/></svg>
  <div class="a" style="left:1342.95px;top:553.55px;width:21.7px;height:21.7px;border-radius:3px;background:#1f1d3e;border:1px solid rgba(0,0,0,0.25)"></div>
  <svg class="a" style="left:1354.45px;top:565.05px" width="9" height="9"><path d="M9 0V9H0z" fill="#fff" fill-opacity="0.95"/></svg>
  <div class="a" style="left:1369.70px;top:553.55px;width:21.7px;height:21.7px;border-radius:3px;border:1px solid #e8e8ec;overflow:hidden;background-color:#fff;background-image:linear-gradient(45deg,#ddd 25%,transparent 25%,transparent 75%,#ddd 75%),linear-gradient(45deg,#ddd 25%,transparent 25%,transparent 75%,#ddd 75%);background-size:6px 6px;background-position:0 0,3px 3px;"><div class="a" style="left:0;top:0;width:50%;height:100%;background:#fff"></div></div>
  <div class="a" style="left:1396.45px;top:553.55px;width:21.7px;height:21.7px;border-radius:3px;border:1px solid #222;background:linear-gradient(90deg,#000 50%,#444 50%)"></div>
  <svg class="a" style="left:1407.95px;top:565.05px" width="9" height="9"><path d="M9 0V9H0z" fill="#fff"/></svg>
  <div class="a" style="left:1423.20px;top:553.55px;width:21.7px;height:21.7px;border-radius:3px;background:#14082b;border:1px solid rgba(0,0,0,0.25)"></div>
  <svg class="a" style="left:1434.70px;top:565.05px" width="9" height="9"><path d="M9 0V9H0z" fill="#fff" fill-opacity="0.95"/></svg>
  <div class="a" style="left:1449.95px;top:553.55px;width:21.7px;height:21.7px;border-radius:3px;background:#7b40f2;border:1px solid rgba(0,0,0,0.25)"></div>
  <svg class="a" style="left:1461.45px;top:565.05px" width="9" height="9"><path d="M9 0V9H0z" fill="#fff" fill-opacity="0.95"/></svg>
  <div class="a" style="left:1476.70px;top:553.55px;width:21.7px;height:21.7px;border-radius:3px;background:#fb7f4a;border:1px solid rgba(0,0,0,0.25)"></div>
  <svg class="a" style="left:1488.20px;top:565.05px" width="9" height="9"><path d="M9 0V9H0z" fill="#fff" fill-opacity="0.95"/></svg>
  <div class="a" style="left:1503.45px;top:553.55px;width:21.7px;height:21.7px;border-radius:3px;background:#1f1e40;border:1px solid rgba(0,0,0,0.25)"></div>
  <svg class="a" style="left:1514.95px;top:565.05px" width="9" height="9"><path d="M9 0V9H0z" fill="#fff" fill-opacity="0.95"/></svg>
  <div class="a" style="left:1316.20px;top:580.30px;width:21.7px;height:21.7px;border-radius:3px;background:#f2ede3;border:1px solid rgba(0,0,0,0.12)"></div>
  <svg class="a" style="left:1327.70px;top:591.80px" width="9" height="9"><path d="M9 0V9H0z" fill="#fff" fill-opacity="0.7"/></svg>
  <div class="a" style="left:1342.95px;top:580.30px;width:21.7px;height:21.7px;border-radius:3px;background:#f4f1ee;border:1px solid rgba(0,0,0,0.12)"></div>
  <svg class="a" style="left:1354.45px;top:591.80px" width="9" height="9"><path d="M9 0V9H0z" fill="#fff" fill-opacity="0.7"/></svg>
  <div class="a" style="left:1369.70px;top:580.30px;width:21.7px;height:21.7px;border-radius:3px;background:#fdfdfd;border:1px solid rgba(0,0,0,0.12)"></div>
  <svg class="a" style="left:1381.20px;top:591.80px" width="9" height="9"><path d="M9 0V9H0z" fill="#fff" fill-opacity="0.7"/></svg>
  <div class="a" style="left:1396.45px;top:580.30px;width:21.7px;height:21.7px;border-radius:3px;background:#f3f3f4;border:1px solid rgba(0,0,0,0.12)"></div>
  <svg class="a" style="left:1407.95px;top:591.80px" width="9" height="9"><path d="M9 0V9H0z" fill="#fff" fill-opacity="0.7"/></svg>
  <div class="a" style="left:1423.20px;top:580.30px;width:21.7px;height:21.7px;border-radius:3px;background:#ee4c22;border:1px solid rgba(0,0,0,0.25)"></div>
  <svg class="a" style="left:1434.70px;top:591.80px" width="9" height="9"><path d="M9 0V9H0z" fill="#fff" fill-opacity="0.95"/></svg>
  <div class="a" style="left:1449.95px;top:580.30px;width:21.7px;height:21.7px;border-radius:3px;background:#2d2d2d;border:1px solid rgba(0,0,0,0.25)"></div>
  <svg class="a" style="left:1461.45px;top:591.80px" width="9" height="9"><path d="M9 0V9H0z" fill="#fff" fill-opacity="0.95"/></svg>
  <div class="a" style="left:1476.70px;top:580.30px;width:21.7px;height:21.7px;border-radius:3px;background:#000000;border:1px solid rgba(0,0,0,0.25)"></div>
  <svg class="a" style="left:1488.20px;top:591.80px" width="9" height="9"><path d="M9 0V9H0z" fill="#fff" fill-opacity="0.95"/></svg>
  <div class="a" style="left:1503.45px;top:580.30px;width:21.7px;height:21.7px;border-radius:3px;background:#c9bdb0;border:1px solid rgba(0,0,0,0.25)"></div>
  <svg class="a" style="left:1514.95px;top:591.80px" width="9" height="9"><path d="M9 0V9H0z" fill="#fff" fill-opacity="0.95"/></svg>
  <div class="a" style="left:1316.20px;top:607.05px;width:21.7px;height:21.7px;border-radius:3px;background:#074b3d;border:1px solid rgba(0,0,0,0.25)"></div>
  <svg class="a" style="left:1327.70px;top:618.55px" width="9" height="9"><path d="M9 0V9H0z" fill="#fff" fill-opacity="0.95"/></svg>
  <div class="a" style="left:1342.95px;top:607.05px;width:21.7px;height:21.7px;border-radius:3px;background:#d9d9d9;border:1px solid rgba(0,0,0,0.12)"></div>
  <svg class="a" style="left:1354.45px;top:618.55px" width="9" height="9"><path d="M9 0V9H0z" fill="#fff" fill-opacity="0.7"/></svg>
  <div class="a" style="left:1369.70px;top:607.05px;width:21.7px;height:21.7px;border-radius:3px;background:#fb6a43;border:1px solid rgba(0,0,0,0.25)"></div>
  <svg class="a" style="left:1381.20px;top:618.55px" width="9" height="9"><path d="M9 0V9H0z" fill="#fff" fill-opacity="0.95"/></svg>
  <div class="a" style="left:1396.45px;top:607.05px;width:21.7px;height:21.7px;border-radius:3px;background:#e6e6e6;border:1px solid rgba(0,0,0,0.12)"></div>
  <svg class="a" style="left:1407.95px;top:618.55px" width="9" height="9"><path d="M9 0V9H0z" fill="#fff" fill-opacity="0.7"/></svg>
  <div class="a" style="left:1423.20px;top:607.05px;width:21.7px;height:21.7px;border-radius:3px;background:#2c4758;border:1px solid rgba(0,0,0,0.25)"></div>
  <svg class="a" style="left:1434.70px;top:618.55px" width="9" height="9"><path d="M9 0V9H0z" fill="#fff" fill-opacity="0.95"/></svg>
  <div class="a" style="left:1449.95px;top:607.05px;width:21.7px;height:21.7px;border-radius:3px;background:#e2e2e2;border:1px solid rgba(0,0,0,0.12)"></div>
  <svg class="a" style="left:1461.45px;top:618.55px" width="9" height="9"><path d="M9 0V9H0z" fill="#fff" fill-opacity="0.7"/></svg>
  <div class="a" style="left:1476.70px;top:607.05px;width:21.7px;height:21.7px;border-radius:3px;background:#1d1d1d;border:1px solid rgba(0,0,0,0.25)"></div>
  <svg class="a" style="left:1488.20px;top:618.55px" width="9" height="9"><path d="M9 0V9H0z" fill="#fff" fill-opacity="0.95"/></svg>
  <div class="a" style="left:1503.45px;top:607.05px;width:21.7px;height:21.7px;border-radius:3px;background:#b9503a;border:1px solid rgba(0,0,0,0.25)"></div>
  <svg class="a" style="left:1514.95px;top:618.55px" width="9" height="9"><path d="M9 0V9H0z" fill="#fff" fill-opacity="0.95"/></svg>
  <div class="a" style="left:1316.20px;top:633.80px;width:21.7px;height:21.7px;border-radius:3px;background:#c3c6c2;border:1px solid rgba(0,0,0,0.25)"></div>
  <svg class="a" style="left:1327.70px;top:645.30px" width="9" height="9"><path d="M9 0V9H0z" fill="#fff" fill-opacity="0.95"/></svg>
  <div class="a" style="left:1342.95px;top:633.80px;width:21.7px;height:21.7px;border-radius:3px;background:#f6f4f1;border:1px solid rgba(0,0,0,0.12)"></div>
  <svg class="a" style="left:1354.45px;top:645.30px" width="9" height="9"><path d="M9 0V9H0z" fill="#fff" fill-opacity="0.7"/></svg>
  <div class="a" style="left:1369.70px;top:633.80px;width:21.7px;height:21.7px;border-radius:3px;background:#2e3a30;border:1px solid rgba(0,0,0,0.25)"></div>
  <svg class="a" style="left:1381.20px;top:645.30px" width="9" height="9"><path d="M9 0V9H0z" fill="#fff" fill-opacity="0.95"/></svg>
  <div class="a" style="left:1396.45px;top:633.80px;width:21.7px;height:21.7px;border-radius:3px;background:#e9e5de;border:1px solid rgba(0,0,0,0.12)"></div>
  <svg class="a" style="left:1407.95px;top:645.30px" width="9" height="9"><path d="M9 0V9H0z" fill="#fff" fill-opacity="0.7"/></svg>
  <div class="a" style="left:1423.20px;top:633.80px;width:21.7px;height:21.7px;border-radius:3px;background:#686868;border:1px solid rgba(0,0,0,0.25)"></div>
  <svg class="a" style="left:1434.70px;top:645.30px" width="9" height="9"><path d="M9 0V9H0z" fill="#fff" fill-opacity="0.95"/></svg>
  <div class="a" style="left:1449.95px;top:633.80px;width:21.7px;height:21.7px;border-radius:3px;background:#ececec;border:1px solid rgba(0,0,0,0.12)"></div>
  <svg class="a" style="left:1461.45px;top:645.30px" width="9" height="9"><path d="M9 0V9H0z" fill="#fff" fill-opacity="0.7"/></svg>
  <div class="a" style="left:1476.70px;top:633.80px;width:21.7px;height:21.7px;border-radius:3px;background:#b6545a;border:1px solid rgba(0,0,0,0.25)"></div>
  <svg class="a" style="left:1488.20px;top:645.30px" width="9" height="9"><path d="M9 0V9H0z" fill="#fff" fill-opacity="0.95"/></svg>
  <div class="a" style="left:1503.45px;top:633.80px;width:21.7px;height:21.7px;border-radius:3px;border:1px solid #222;background:linear-gradient(90deg,#000 50%,#555 50%)"></div>
  <svg class="a" style="left:1514.95px;top:645.30px" width="9" height="9"><path d="M9 0V9H0z" fill="#fff"/></svg>
  <div class="a" style="left:1316.20px;top:660.55px;width:21.7px;height:21.7px;border-radius:3px;background:#6e9fc0;border:1px solid rgba(0,0,0,0.25)"></div>
  <svg class="a" style="left:1327.70px;top:672.05px" width="9" height="9"><path d="M9 0V9H0z" fill="#fff" fill-opacity="0.95"/></svg>
  <div class="a" style="left:1342.95px;top:660.55px;width:21.7px;height:21.7px;border-radius:3px;border:1px solid #e8e8ec;overflow:hidden;background-color:#fff;background-image:linear-gradient(45deg,#ddd 25%,transparent 25%,transparent 75%,#ddd 75%),linear-gradient(45deg,#ddd 25%,transparent 25%,transparent 75%,#ddd 75%);background-size:6px 6px;background-position:0 0,3px 3px;"><div class="a" style="left:0;top:0;width:50%;height:100%;background:#fff"></div></div>
  <div class="a" style="left:1369.70px;top:660.55px;width:21.7px;height:21.7px;border-radius:3px;border:1px solid #e8e8ec;overflow:hidden;background-color:#fff;background-image:linear-gradient(45deg,#ddd 25%,transparent 25%,transparent 75%,#ddd 75%),linear-gradient(45deg,#ddd 25%,transparent 25%,transparent 75%,#ddd 75%);background-size:6px 6px;background-position:0 0,3px 3px;"><div class="a" style="left:0;top:0;width:50%;height:100%;background:#fff"></div></div>
  <div class="a" style="left:1396.45px;top:660.55px;width:21.7px;height:21.7px;border-radius:3px;background:#0445f5;border:1px solid rgba(0,0,0,0.25)"></div>
  <svg class="a" style="left:1407.95px;top:672.05px" width="9" height="9"><path d="M9 0V9H0z" fill="#fff" fill-opacity="0.95"/></svg>
  <div class="a" style="left:1423.20px;top:660.55px;width:21.7px;height:21.7px;border-radius:3px;background:#0b1e2e;border:1px solid rgba(0,0,0,0.25)"></div>
  <svg class="a" style="left:1434.70px;top:672.05px" width="9" height="9"><path d="M9 0V9H0z" fill="#fff" fill-opacity="0.95"/></svg>
  <div class="a" style="left:1449.95px;top:660.55px;width:21.7px;height:21.7px;border-radius:3px;border:1px solid #222;background:linear-gradient(90deg,#0b1e2e 50%,#5c6878 50%)"></div>
  <svg class="a" style="left:1461.45px;top:672.05px" width="9" height="9"><path d="M9 0V9H0z" fill="#fff"/></svg>
  <div class="a" style="left:1476.70px;top:660.55px;width:21.7px;height:21.7px;border-radius:3px;border:1px solid #bdbdc2;background-color:#e4e4e4;background-image:linear-gradient(45deg,#c4c4c4 25%,transparent 25%,transparent 75%,#c4c4c4 75%),linear-gradient(45deg,#c4c4c4 25%,transparent 25%,transparent 75%,#c4c4c4 75%);background-size:6px 6px;background-position:0 0,3px 3px;overflow:hidden"><div class="a" style="left:0;top:0;width:50%;height:100%;background:#000"></div></div>
  <svg class="a" style="left:1488.20px;top:672.05px" width="9" height="9"><path d="M9 0V9H0z" fill="#fff"/></svg>
  <div class="a" style="left:1503.45px;top:660.55px;width:21.7px;height:21.7px;border-radius:3px;border:1px solid #bdbdc2;background-color:#e4e4e4;background-image:linear-gradient(45deg,#c4c4c4 25%,transparent 25%,transparent 75%,#c4c4c4 75%),linear-gradient(45deg,#c4c4c4 25%,transparent 25%,transparent 75%,#c4c4c4 75%);background-size:6px 6px;background-position:0 0,3px 3px;overflow:hidden"><div class="a" style="left:0;top:0;width:50%;height:100%;background:#000"></div></div>
  <svg class="a" style="left:1514.95px;top:672.05px" width="9" height="9"><path d="M9 0V9H0z" fill="#fff"/></svg>
  <div class="a" style="left:1316.20px;top:687.30px;width:21.7px;height:21.7px;border-radius:3px;background:#262729;border:1px solid rgba(0,0,0,0.25)"></div>
  <svg class="a" style="left:1327.70px;top:698.80px" width="9" height="9"><path d="M9 0V9H0z" fill="#fff" fill-opacity="0.95"/></svg>
  <div class="a" style="left:1342.95px;top:687.30px;width:21.7px;height:21.7px;border-radius:3px;background:#f3f3f4;border:1px solid rgba(0,0,0,0.12)"></div>
  <svg class="a" style="left:1354.45px;top:698.80px" width="9" height="9"><path d="M9 0V9H0z" fill="#fff" fill-opacity="0.7"/></svg>
  <div class="a" style="left:1369.70px;top:687.30px;width:21.7px;height:21.7px;border-radius:3px;background:#43df5e;border:1px solid rgba(0,0,0,0.25)"></div>
  <svg class="a" style="left:1381.20px;top:698.80px" width="9" height="9"><path d="M9 0V9H0z" fill="#fff" fill-opacity="0.95"/></svg>
  <div class="a" style="left:1396.45px;top:687.30px;width:21.7px;height:21.7px;border-radius:3px;background:#7b7c80;border:1px solid rgba(0,0,0,0.25)"></div>
  <svg class="a" style="left:1407.95px;top:698.80px" width="9" height="9"><path d="M9 0V9H0z" fill="#fff" fill-opacity="0.95"/></svg>
  <div class="a" style="left:1423.20px;top:687.30px;width:21.7px;height:21.7px;border-radius:3px;background:#dcf95c;border:1px solid rgba(0,0,0,0.12)"></div>
  <svg class="a" style="left:1434.70px;top:698.80px" width="9" height="9"><path d="M9 0V9H0z" fill="#fff" fill-opacity="0.7"/></svg>
  <div class="a" style="left:1449.95px;top:687.30px;width:21.7px;height:21.7px;border-radius:3px;background:#8b8ff5;border:1px solid rgba(0,0,0,0.25)"></div>
  <svg class="a" style="left:1461.45px;top:698.80px" width="9" height="9"><path d="M9 0V9H0z" fill="#fff" fill-opacity="0.95"/></svg>
  <div class="a" style="left:1476.70px;top:687.30px;width:21.7px;height:21.7px;border-radius:3px;background:#6a6a6a;border:1px solid rgba(0,0,0,0.25)"></div>
  <svg class="a" style="left:1488.20px;top:698.80px" width="9" height="9"><path d="M9 0V9H0z" fill="#fff" fill-opacity="0.95"/></svg>
  <div class="a" style="left:1503.45px;top:687.30px;width:21.7px;height:21.7px;border-radius:3px;background:#a8a8e8;border:1px solid rgba(0,0,0,0.25)"></div>
  <svg class="a" style="left:1514.95px;top:698.80px" width="9" height="9"><path d="M9 0V9H0z" fill="#fff" fill-opacity="0.95"/></svg>
  <div class="a" style="left:1316.20px;top:714.05px;width:21.7px;height:21.7px;border-radius:3px;background:#f1f2f4;border:1px solid rgba(0,0,0,0.12)"></div>
  <svg class="a" style="left:1327.70px;top:725.55px" width="9" height="9"><path d="M9 0V9H0z" fill="#fff" fill-opacity="0.7"/></svg>
  <div class="a" style="left:1342.95px;top:714.05px;width:21.7px;height:21.7px;border-radius:3px;background:#083330;border:1px solid rgba(0,0,0,0.25)"></div>
  <svg class="a" style="left:1354.45px;top:725.55px" width="9" height="9"><path d="M9 0V9H0z" fill="#fff" fill-opacity="0.95"/></svg>
  <div class="a" style="left:1369.70px;top:714.05px;width:21.7px;height:21.7px;border-radius:3px;background:#f04646;border:1px solid rgba(0,0,0,0.25)"></div>
  <svg class="a" style="left:1381.20px;top:725.55px" width="9" height="9"><path d="M9 0V9H0z" fill="#fff" fill-opacity="0.95"/></svg>
  <div class="a" style="left:1396.45px;top:714.05px;width:21.7px;height:21.7px;border-radius:3px;background:#1f7be6;border:1px solid rgba(0,0,0,0.25)"></div>
  <svg class="a" style="left:1407.95px;top:725.55px" width="9" height="9"><path d="M9 0V9H0z" fill="#fff" fill-opacity="0.95"/></svg>
  <div class="a" style="left:1423.20px;top:714.05px;width:21.7px;height:21.7px;border-radius:3px;background:#fcd0dc;border:1px solid rgba(0,0,0,0.12)"></div>
  <svg class="a" style="left:1434.70px;top:725.55px" width="9" height="9"><path d="M9 0V9H0z" fill="#fff" fill-opacity="0.7"/></svg>
  <div class="a" style="left:1449.95px;top:714.05px;width:21.7px;height:21.7px;border-radius:3px;background:#f0f0f0;border:1px solid rgba(0,0,0,0.12)"></div>
  <svg class="a" style="left:1461.45px;top:725.55px" width="9" height="9"><path d="M9 0V9H0z" fill="#fff" fill-opacity="0.7"/></svg>
  <div class="a" style="left:1476.70px;top:714.05px;width:21.7px;height:21.7px;border-radius:3px;background:#2d7be6;border:1px solid rgba(0,0,0,0.25)"></div>
  <svg class="a" style="left:1488.20px;top:725.55px" width="9" height="9"><path d="M9 0V9H0z" fill="#fff" fill-opacity="0.95"/></svg>
  <div class="a" style="left:1503.45px;top:714.05px;width:21.7px;height:21.7px;border-radius:3px;background:#1cc27e;border:1px solid rgba(0,0,0,0.25)"></div>
  <svg class="a" style="left:1514.95px;top:725.55px" width="9" height="9"><path d="M9 0V9H0z" fill="#fff" fill-opacity="0.95"/></svg>
  <div class="a" style="left:1316.20px;top:740.80px;width:21.7px;height:21.7px;border-radius:3px;border:1px solid #bdbdc2;background-color:#e4e4e4;background-image:linear-gradient(45deg,#c4c4c4 25%,transparent 25%,transparent 75%,#c4c4c4 75%),linear-gradient(45deg,#c4c4c4 25%,transparent 25%,transparent 75%,#c4c4c4 75%);background-size:6px 6px;background-position:0 0,3px 3px;overflow:hidden"><div class="a" style="left:0;top:0;width:50%;height:100%;background:#000"></div></div>
  <svg class="a" style="left:1327.70px;top:752.30px" width="9" height="9"><path d="M9 0V9H0z" fill="#fff"/></svg>
  <div class="a" style="left:1342.95px;top:740.80px;width:21.7px;height:21.7px;border-radius:3px;background:#363636;border:1px solid rgba(0,0,0,0.25)"></div>
  <svg class="a" style="left:1354.45px;top:752.30px" width="9" height="9"><path d="M9 0V9H0z" fill="#fff" fill-opacity="0.95"/></svg>
  <div class="a" style="left:1369.70px;top:740.80px;width:21.7px;height:21.7px;border-radius:3px;background:#f5f5f5;border:1px solid rgba(0,0,0,0.12)"></div>
  <svg class="a" style="left:1381.20px;top:752.30px" width="9" height="9"><path d="M9 0V9H0z" fill="#fff" fill-opacity="0.7"/></svg>
  <div class="a" style="left:1396.45px;top:740.80px;width:21.7px;height:21.7px;border-radius:3px;background:#6b6b6b;border:1px solid rgba(0,0,0,0.25)"></div>
  <svg class="a" style="left:1407.95px;top:752.30px" width="9" height="9"><path d="M9 0V9H0z" fill="#fff" fill-opacity="0.95"/></svg>
  <div class="a" style="left:1423.20px;top:740.80px;width:21.7px;height:21.7px;border-radius:3px;background:#262626;border:1px solid rgba(0,0,0,0.25)"></div>
  <svg class="a" style="left:1434.70px;top:752.30px" width="9" height="9"><path d="M9 0V9H0z" fill="#fff" fill-opacity="0.95"/></svg>
  <div class="a" style="left:1449.95px;top:740.80px;width:21.7px;height:21.7px;border-radius:3px;background:#f0b9bd;border:1px solid rgba(0,0,0,0.12)"></div>
  <svg class="a" style="left:1461.45px;top:752.30px" width="9" height="9"><path d="M9 0V9H0z" fill="#fff" fill-opacity="0.7"/></svg>
  <div class="a" style="left:1476.70px;top:740.80px;width:21.7px;height:21.7px;border-radius:3px;background:#4a7ce8;border:1px solid rgba(0,0,0,0.25)"></div>
  <svg class="a" style="left:1488.20px;top:752.30px" width="9" height="9"><path d="M9 0V9H0z" fill="#fff" fill-opacity="0.95"/></svg>
  <div class="a" style="left:1503.45px;top:740.80px;width:21.7px;height:21.7px;border-radius:3px;background:#8041e8;border:1px solid rgba(0,0,0,0.25)"></div>
  <svg class="a" style="left:1514.95px;top:752.30px" width="9" height="9"><path d="M9 0V9H0z" fill="#fff" fill-opacity="0.95"/></svg>
  <div class="a" style="left:1316.20px;top:767.55px;width:21.7px;height:21.7px;border-radius:3px;background:#fdbb40;border:1px solid rgba(0,0,0,0.25)"></div>
  <svg class="a" style="left:1327.70px;top:779.05px" width="9" height="9"><path d="M9 0V9H0z" fill="#fff" fill-opacity="0.95"/></svg>
  <div class="a" style="left:1342.95px;top:767.55px;width:21.7px;height:21.7px;border-radius:3px;background:#3b73f0;border:1px solid rgba(0,0,0,0.25)"></div>
  <svg class="a" style="left:1354.45px;top:779.05px" width="9" height="9"><path d="M9 0V9H0z" fill="#fff" fill-opacity="0.95"/></svg>
  <div class="a" style="left:1369.70px;top:767.55px;width:21.7px;height:21.7px;border-radius:3px;background:#ececf0;border:1px solid rgba(0,0,0,0.12)"></div>
  <svg class="a" style="left:1381.20px;top:779.05px" width="9" height="9"><path d="M9 0V9H0z" fill="#fff" fill-opacity="0.7"/></svg>
  <div class="a" style="left:1396.45px;top:767.55px;width:21.7px;height:21.7px;border-radius:3px;background:#1f1f1f;border:1px solid rgba(0,0,0,0.25)"></div>
  <svg class="a" style="left:1407.95px;top:779.05px" width="9" height="9"><path d="M9 0V9H0z" fill="#fff" fill-opacity="0.95"/></svg>
  <div class="a" style="left:1423.20px;top:767.55px;width:21.7px;height:21.7px;border-radius:3px;background:#efefef;border:1px solid rgba(0,0,0,0.12)"></div>
  <svg class="a" style="left:1434.70px;top:779.05px" width="9" height="9"><path d="M9 0V9H0z" fill="#fff" fill-opacity="0.7"/></svg>
  <div class="a" style="left:1449.95px;top:767.55px;width:21.7px;height:21.7px;border-radius:3px;border:1px solid #e6e8ee;background:#fff"></div>
  <svg class="a" style="left:1455.80px;top:773.40px" width="10" height="10"><path d="M5 0.5v9M0.5 5h9" stroke="#9aa2b8" stroke-width="1.3"/></svg>
  <div class="t" style="left:1316.5px;top:813px;font-size:11px;font-weight:bold;color:#6482cc">Manage Global Colors</div>
</div>

</body></html>
